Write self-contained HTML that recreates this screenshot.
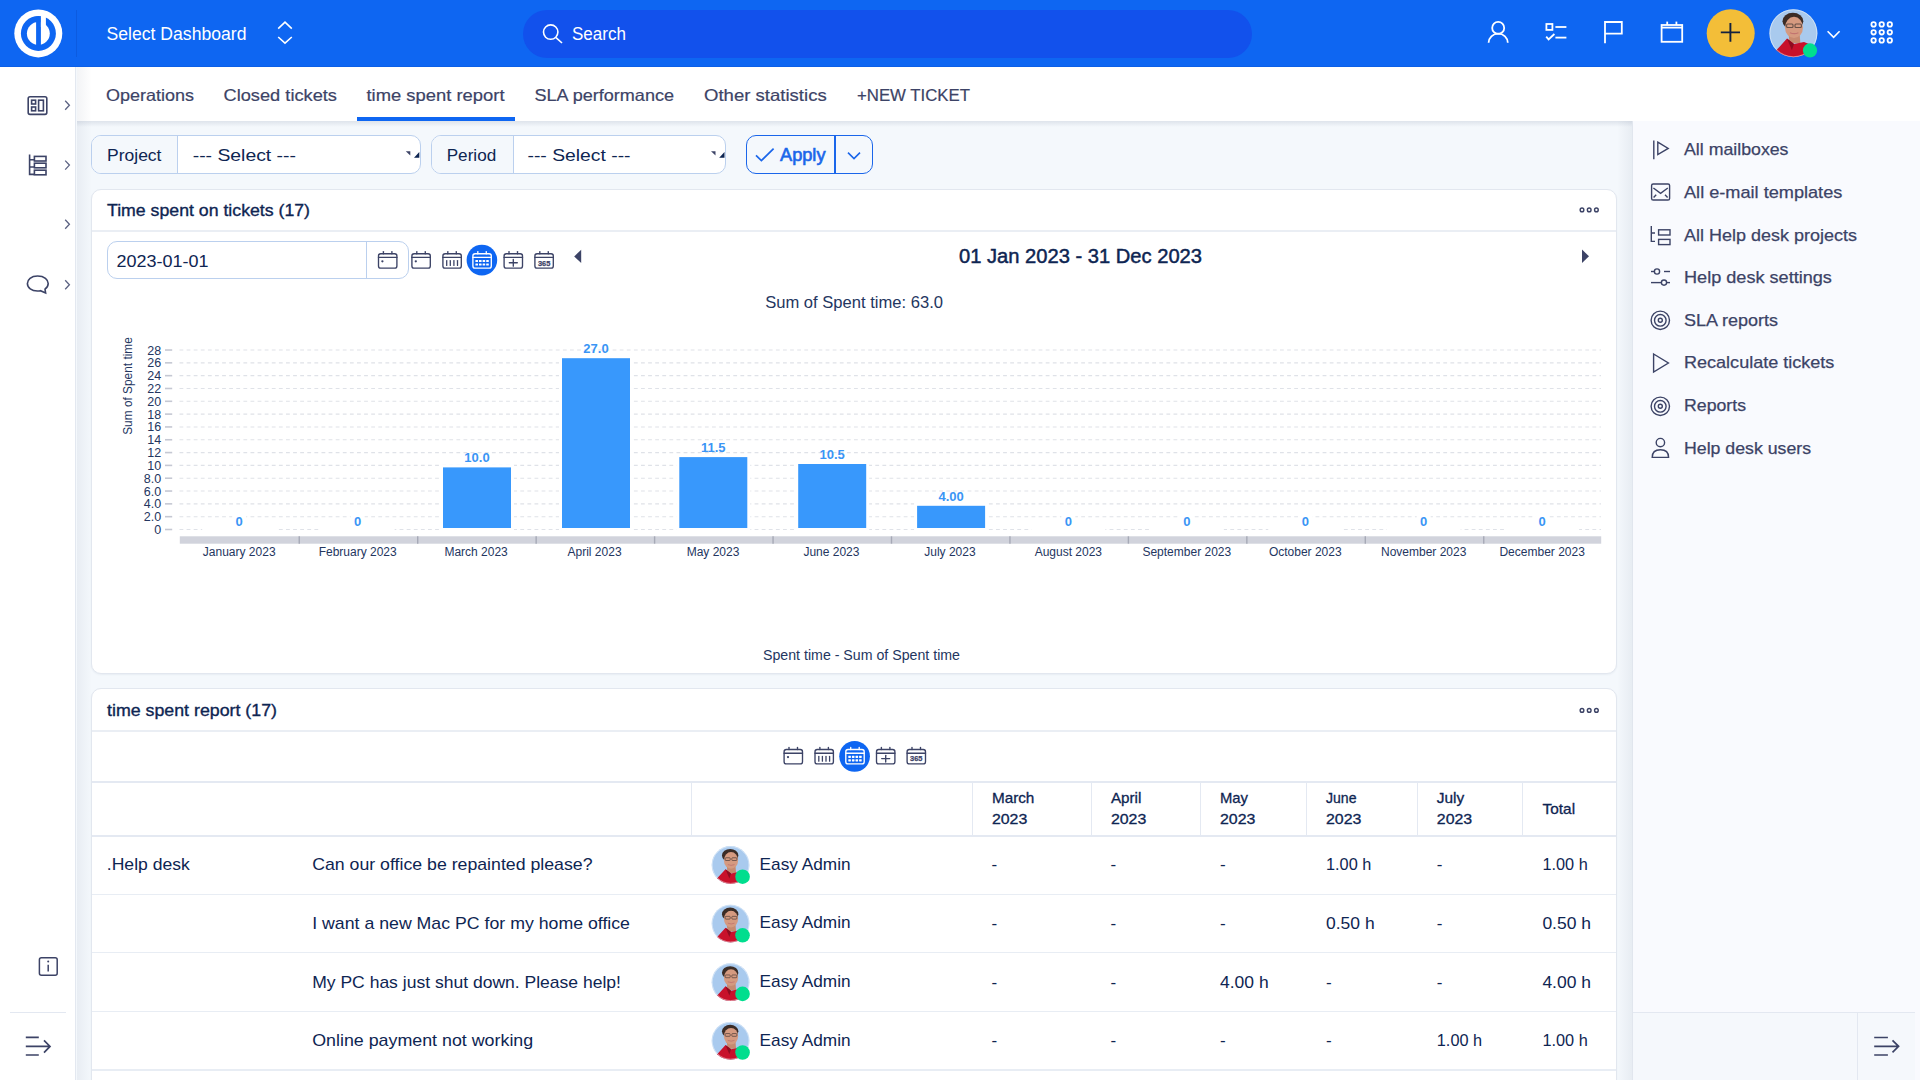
<!DOCTYPE html>
<html><head><meta charset="utf-8"><title>time spent report</title>
<style>
*{box-sizing:border-box}
html,body{margin:0;padding:0}
body{width:1920px;height:1080px;overflow:hidden;position:relative;background:#F4F8FC;font-family:"Liberation Sans",sans-serif}
.a{position:absolute}
svg text{font-family:"Liberation Sans",sans-serif}
</style></head><body>
<div class="a" style="left:0;top:0;width:1920px;height:67px;background:#0E66F2;border-bottom:1px solid #0C5FE6"></div>
<div class="a" style="left:76px;top:10px;width:1px;height:47px;background:#0C5BE0"></div>
<div class="a" style="left:523px;top:10px;width:729px;height:48px;border-radius:24px;background:#1251EC"></div>
<div class="a" style="left:0;top:67px;width:76px;height:1013px;background:#fff;border-right:1px solid #E3E8F0"></div>
<div class="a" style="left:77px;top:67px;width:1843px;height:54px;background:#fff"></div>
<div class="a" style="left:77px;top:121px;width:1843px;height:6px;background:linear-gradient(180deg,rgba(30,50,90,.10),rgba(30,50,90,0))"></div>
<div class="a" style="left:357px;top:117px;width:158px;height:4px;background:#0E66F2"></div>

<div class="a" style="left:1632px;top:121px;width:288px;height:959px;background:#F9FAFE;border-left:1px solid #E1E6EE"></div>
<div class="a" style="left:1617px;top:121px;width:15px;height:959px;background:linear-gradient(90deg,rgba(30,50,90,0),rgba(30,50,90,.06))"></div>
<div class="a" style="left:1633px;top:1012px;width:282px;height:68px;background:#F5F8FC;border-top:1px solid #E3E8F1"></div>
<div class="a" style="left:1857px;top:1013px;width:1px;height:67px;background:#E3E8F1"></div>
<div class="a" style="left:10px;top:1012px;width:56px;height:1px;background:#E3E8F1"></div>
<!-- filter -->
<div class="a" style="left:91px;top:135px;width:330px;height:39px;border:1px solid #BBD0EE;border-radius:10px;background:#fff;overflow:hidden"><div style="width:86px;height:100%;background:#F4F8FC;border-right:1px solid #BBD0EE"></div></div>
<div class="a" style="left:431px;top:135px;width:295px;height:39px;border:1px solid #BBD0EE;border-radius:10px;background:#fff;overflow:hidden"><div style="width:81.5px;height:100%;background:#F4F8FC;border-right:1px solid #BBD0EE"></div></div>
<div class="a" style="left:746px;top:135px;width:127px;height:39px;border:1.7px solid #1A66EA;border-radius:10px;background:#F4F8FC"></div>
<div class="a" style="left:834.2px;top:135px;width:2px;height:39px;background:#1A66EA"></div>
<!-- cards -->
<div class="a" style="left:91px;top:188.5px;width:1526px;height:485px;background:#fff;border:1px solid #E2E7EF;border-radius:10px;box-shadow:0 1px 2px rgba(40,60,100,.06)"></div>
<div class="a" style="left:92px;top:230px;width:1524px;height:1.5px;background:#EAEEF4"></div>
<div class="a" style="left:106.5px;top:241px;width:302px;height:38px;border:1px solid #BBD0EE;border-radius:10px;background:#fff"></div>
<div class="a" style="left:366px;top:242px;width:1px;height:36px;background:#BBD0EE"></div>
<div class="a" style="left:91px;top:688.3px;width:1526px;height:500px;background:#fff;border:1px solid #E2E7EF;border-radius:10px;box-shadow:0 1px 2px rgba(40,60,100,.06)"></div>
<div class="a" style="left:92px;top:730px;width:1524px;height:1.5px;background:#EAEEF4"></div>
<div class="a" style="left:92px;top:781px;width:1524px;height:1.5px;background:#E4E9F2"></div>
<div class="a" style="left:92px;top:835px;width:1524px;height:1.5px;background:#E4E9F2"></div>
<div class="a" style="left:92px;top:893.6px;width:1524px;height:1.2px;background:#E8EDF4"></div>
<div class="a" style="left:92px;top:952.2px;width:1524px;height:1.2px;background:#E8EDF4"></div>
<div class="a" style="left:92px;top:1010.8px;width:1524px;height:1.2px;background:#E8EDF4"></div>
<div class="a" style="left:92px;top:1069.4px;width:1524px;height:1.2px;background:#E8EDF4"></div>
<div class="a" style="left:691px;top:782px;width:1px;height:54px;background:#E4E9F2"></div>
<div class="a" style="left:971.5px;top:782px;width:1px;height:54px;background:#E4E9F2"></div>
<div class="a" style="left:1091px;top:782px;width:1px;height:54px;background:#E4E9F2"></div>
<div class="a" style="left:1200.4px;top:782px;width:1px;height:54px;background:#E4E9F2"></div>
<div class="a" style="left:1306px;top:782px;width:1px;height:54px;background:#E4E9F2"></div>
<div class="a" style="left:1416.5px;top:782px;width:1px;height:54px;background:#E4E9F2"></div>
<div class="a" style="left:1522px;top:782px;width:1px;height:54px;background:#E4E9F2"></div>
<div class="a" style="left:77px;top:67px;width:15px;height:1013px;background:linear-gradient(90deg,rgba(30,50,90,.055),rgba(30,50,90,0))"></div>
<svg class="a" style="left:0;top:0" width="1920" height="1080" viewBox="0 0 1920 1080">
<circle cx="38.3" cy="33.4" r="24" fill="#fff"/>
<circle cx="38.4" cy="33.4" r="17.5" fill="#0E66F2"/>
<circle cx="38.35" cy="33.5" r="11.45" fill="#fff"/>
<rect x="36.1" y="16.6" width="4.8" height="29.5" fill="#0E66F2"/>
<rect x="40.9" y="14" width="5" height="13" fill="#fff"/>
<text x="106.5" y="39.8" font-size="17.5" font-weight="400" fill="#fff" textLength="140" lengthAdjust="spacingAndGlyphs">Select Dashboard</text>
<path d="M278.2 28.6 L285 22.2 L291.8 28.6 M278.2 37 L285 43.2 L291.8 37" fill="none" stroke="#fff" stroke-width="1.6"/>
<circle cx="550.7" cy="32.1" r="7.2" fill="none" stroke="#fff" stroke-width="1.6"/>
<line x1="556" y1="37.6" x2="562" y2="43" stroke="#fff" stroke-width="1.6"/>
<text x="572" y="39.8" font-size="17.5" font-weight="400" fill="#fff" textLength="54" lengthAdjust="spacingAndGlyphs">Search</text>
<g fill="none" stroke="#fff" stroke-width="1.8"><circle cx="1498.2" cy="27.9" r="6"/><path d="M1488.6 42.8 A9.6 9.2 0 0 1 1507.8 42.8"/><rect x="1546.4" y="24" width="6" height="5.9"/><line x1="1555.4" y1="27" x2="1566.4" y2="27"/><line x1="1555.4" y1="37.6" x2="1566.4" y2="37.6"/><path d="M1546.2 36.6 L1548.6 39.4 L1554.4 34"/><path d="M1605 43.2 L1605 22 L1621.8 22 L1621.8 33.6 L1605 33.6"/><rect x="1661.6" y="25" width="20.6" height="16.8"/><line x1="1661.6" y1="27.6" x2="1682.2" y2="27.6"/><line x1="1667.2" y1="21.6" x2="1667.2" y2="25"/><line x1="1676.4" y1="21.6" x2="1676.4" y2="25"/></g>
<circle cx="1730.7" cy="33.2" r="24" fill="#F3BE38"/>
<path d="M1720.8 32.4 L1740 32.4 M1730.4 23 L1730.4 41.8" stroke="#13213F" stroke-width="1.9"/>
<g><clipPath id="av1793_33"><circle cx="1793.4" cy="33.2" r="24"/></clipPath><circle cx="1793.4" cy="33.2" r="24" fill="#A9CAEE"/><g clip-path="url(#av1793_33)"><path d="M1788.40 31.20 L1799.40 31.20 L1800.40 43.20 L1789.40 43.20 Z" fill="#C68A70"/><path d="M1765.40 57.20 L1777.00 49.50 L1787.00 38.50 L1794.00 44.00 L1804.00 42.00 L1817.40 47.20 L1821.40 63.20 L1765.40 63.20 Z" fill="#C8112B"/><path d="M1787.00 38.50 L1794.00 44.00 L1791.90 50.20 Z" fill="#8E0C20"/><ellipse cx="1792.90" cy="21.20" rx="10.40" ry="8.40" fill="#3B2C26"/><ellipse cx="1794.00" cy="27.40" rx="9.00" ry="10.60" fill="#D59A80"/><rect x="1786.60" y="24.00" width="6.40" height="3.50" rx="1.00" fill="none" stroke="#54433D" stroke-width="1.10" opacity=".85"/><rect x="1795.00" y="24.00" width="6.40" height="3.50" rx="1.00" fill="none" stroke="#54433D" stroke-width="1.10" opacity=".85"/><path d="M1789.90 32.70 Q1794.40 34.60 1798.40 32.70" fill="none" stroke="#B9646A" stroke-width="1.10" opacity=".7"/></g><circle cx="1793.4" cy="33.2" r="23.5" fill="none" stroke="#fff" stroke-opacity=".45" stroke-width="1"/><circle cx="1810" cy="50.4" r="7.1" fill="#00DE8E"/></g>
<path d="M1827.6 31.2 L1833.6 37.4 L1839.6 31.2" fill="none" stroke="#fff" stroke-width="1.6"/>
<circle cx="1873.6" cy="24.4" r="2.2" fill="none" stroke="#fff" stroke-width="1.8"/>
<circle cx="1881.7" cy="24.4" r="2.2" fill="none" stroke="#fff" stroke-width="1.8"/>
<circle cx="1889.8" cy="24.4" r="2.2" fill="none" stroke="#fff" stroke-width="1.8"/>
<circle cx="1873.6" cy="32.3" r="2.2" fill="none" stroke="#fff" stroke-width="1.8"/>
<circle cx="1881.7" cy="32.3" r="2.2" fill="none" stroke="#fff" stroke-width="1.8"/>
<circle cx="1889.8" cy="32.3" r="2.2" fill="none" stroke="#fff" stroke-width="1.8"/>
<circle cx="1873.6" cy="40.4" r="2.2" fill="none" stroke="#fff" stroke-width="1.8"/>
<circle cx="1881.7" cy="40.4" r="2.2" fill="none" stroke="#fff" stroke-width="1.8"/>
<circle cx="1889.8" cy="40.4" r="2.2" fill="none" stroke="#fff" stroke-width="1.8"/>
<g fill="none" stroke="#3C4366" stroke-width="1.6"><rect x="28.2" y="96.8" width="18.6" height="17.6" rx="1.8"/><rect x="31.6" y="100.2" width="4" height="3.8"/><rect x="31.6" y="107" width="4" height="3.8"/><rect x="38.6" y="100.2" width="4.8" height="10.6"/><path d="M29.6 154.5 L29.6 174.4 L34 174.4 M29.6 159.8 L34 159.8 M29.6 167 L34 167"/><rect x="34.4" y="156.4" width="11.6" height="4.6"/><rect x="34.4" y="163.2" width="11.6" height="4.6"/><rect x="34.4" y="170.2" width="11.6" height="4.6"/><path d="M37.6 276 C 31 276 27.4 279.6 27.4 283.6 C 27.4 288 31.6 291 37.4 291 C 38.6 291 39.6 290.9 40.4 290.7 L 45.6 293 L 45 289.2 C 47.2 287.7 48.2 285.7 48.2 283.6 C 48.2 279.6 44.4 276 37.6 276 Z"/></g>
<path d="M65.2 100.7 L69.4 105.2 L65.2 109.7" fill="none" stroke="#5B6282" stroke-width="1.3"/>
<path d="M65.2 160.6 L69.4 165.1 L65.2 169.6" fill="none" stroke="#5B6282" stroke-width="1.3"/>
<path d="M65.2 219.8 L69.4 224.3 L65.2 228.8" fill="none" stroke="#5B6282" stroke-width="1.3"/>
<path d="M65.2 280.2 L69.4 284.7 L65.2 289.2" fill="none" stroke="#5B6282" stroke-width="1.3"/>
<g fill="none" stroke="#3C4366" stroke-width="1.5"><rect x="39.4" y="957.8" width="17.8" height="17.4" rx="2"/><line x1="48.2" y1="964.8" x2="48.2" y2="971.4"/><path d="M25.8 1037.4 L38.8 1037.4 M25.8 1055 L38.8 1055 M25.8 1046.4 L49.6 1046.4 M44 1040.4 L50 1046.4 L44 1052.6" stroke-width="1.7"/></g>
<circle cx="48.2" cy="961.6" r="1" fill="#3C4366"/>
<path d="M1874.2 1037.5 L1887.9 1037.5 M1874.2 1055 L1887.9 1055 M1874.2 1046.3 L1898.4 1046.3 M1892.5 1040.4 L1898.6 1046.3 L1892.5 1052.4" fill="none" stroke="#3C4366" stroke-width="1.7"/>
<text x="106" y="100.6" font-size="16.5" font-weight="400" fill="#3C4366" textLength="88" lengthAdjust="spacingAndGlyphs" stroke="#3C4366" stroke-width="0.2">Operations</text>
<text x="223.5" y="100.6" font-size="16.5" font-weight="400" fill="#3C4366" textLength="113.5" lengthAdjust="spacingAndGlyphs" stroke="#3C4366" stroke-width="0.2">Closed tickets</text>
<text x="366.5" y="100.6" font-size="16.5" font-weight="400" fill="#3C4366" textLength="138" lengthAdjust="spacingAndGlyphs" stroke="#3C4366" stroke-width="0.2">time spent report</text>
<text x="534.5" y="100.6" font-size="16.5" font-weight="400" fill="#3C4366" textLength="139.5" lengthAdjust="spacingAndGlyphs" stroke="#3C4366" stroke-width="0.2">SLA performance</text>
<text x="704" y="100.6" font-size="16.5" font-weight="400" fill="#3C4366" textLength="122.7" lengthAdjust="spacingAndGlyphs" stroke="#3C4366" stroke-width="0.2">Other statistics</text>
<text x="857" y="100.6" font-size="16.5" font-weight="400" fill="#3C4366" textLength="113" lengthAdjust="spacingAndGlyphs" stroke="#3C4366" stroke-width="0.2">+NEW TICKET</text>
<text x="107" y="160.6" font-size="17" font-weight="400" fill="#0E2552" textLength="54.5" lengthAdjust="spacingAndGlyphs">Project</text>
<text x="192.7" y="161.4" font-size="17" font-weight="400" fill="#0E2552" textLength="103.3" lengthAdjust="spacingAndGlyphs">--- Select ---</text>
<text x="446.7" y="160.6" font-size="17" font-weight="400" fill="#0E2552" textLength="49.5" lengthAdjust="spacingAndGlyphs">Period</text>
<text x="527.5" y="161.4" font-size="17" font-weight="400" fill="#0E2552" textLength="103" lengthAdjust="spacingAndGlyphs">--- Select ---</text>
<path d="M405.8 151.2 L410.3 151.2 L410.3 155.4 Z" fill="#3C4366"/>
<path d="M419.3 152 L419.3 157.8 L414.0 157.8 Z" fill="#0E2552"/>
<path d="M711 151.2 L715.5 151.2 L715.5 155.4 Z" fill="#3C4366"/>
<path d="M724.5 152 L724.5 157.8 L719.2 157.8 Z" fill="#0E2552"/>
<path d="M756 155.4 L761.4 160.6 L773.6 148.6" fill="none" stroke="#1A66EA" stroke-width="1.7"/>
<text x="780" y="160.5" font-size="17.5" font-weight="400" fill="#1A66EA" textLength="45.5" lengthAdjust="spacingAndGlyphs" stroke="#1A66EA" stroke-width="0.6">Apply</text>
<path d="M848 152.6 L854 158.6 L860 152.6" fill="none" stroke="#1A66EA" stroke-width="1.6"/>
<text x="107" y="216.1" font-size="17" font-weight="400" fill="#0E2552" textLength="203" lengthAdjust="spacingAndGlyphs" stroke="#0E2552" stroke-width="0.35">Time spent on tickets (17)</text>
<circle cx="1582" cy="209.9" r="1.85" fill="none" stroke="#3C4366" stroke-width="1.4"/>
<circle cx="1589.2" cy="209.9" r="1.85" fill="none" stroke="#3C4366" stroke-width="1.4"/>
<circle cx="1596.4" cy="209.9" r="1.85" fill="none" stroke="#3C4366" stroke-width="1.4"/>
<text x="116.5" y="267.2" font-size="17" font-weight="400" fill="#0E2552" textLength="92" lengthAdjust="spacingAndGlyphs">2023-01-01</text>
<g transform="translate(378,251.2)" fill="none" stroke="#3C4366" stroke-width="1.35" stroke-linecap="round"><rect x="0.5" y="2.5" width="18.4" height="14.4" rx="2.2"/><line x1="0.5" y1="6.2" x2="18.9" y2="6.2"/><line x1="5.4" y1="0.4" x2="5.4" y2="2.5"/><line x1="13.9" y1="0.4" x2="13.9" y2="2.5"/><circle cx="4.4" cy="10.1" r="1.15" fill="#3C4366" stroke="none"/></g>
<g transform="translate(411.4,251.2)" fill="none" stroke="#3C4366" stroke-width="1.35" stroke-linecap="round"><rect x="0.5" y="2.5" width="18.4" height="14.4" rx="2.2"/><line x1="0.5" y1="6.2" x2="18.9" y2="6.2"/><line x1="5.4" y1="0.4" x2="5.4" y2="2.5"/><line x1="13.9" y1="0.4" x2="13.9" y2="2.5"/><circle cx="4.4" cy="10.1" r="1.15" fill="#3C4366" stroke="none"/></g>
<g transform="translate(442.4,251.2)" fill="none" stroke="#3C4366" stroke-width="1.35" stroke-linecap="round"><rect x="0.5" y="2.5" width="18.4" height="14.4" rx="2.2"/><line x1="0.5" y1="6.2" x2="18.9" y2="6.2"/><line x1="5.4" y1="0.4" x2="5.4" y2="2.5"/><line x1="13.9" y1="0.4" x2="13.9" y2="2.5"/><line x1="4.30" y1="9.4" x2="4.30" y2="14.2" stroke-width="1.3"/><line x1="7.90" y1="9.4" x2="7.90" y2="14.2" stroke-width="1.3"/><line x1="11.50" y1="9.4" x2="11.50" y2="14.2" stroke-width="1.3"/><line x1="15.10" y1="9.4" x2="15.10" y2="14.2" stroke-width="1.3"/></g>
<circle cx="481.9" cy="260.1" r="15.3" fill="#0E66F2"/>
<g transform="translate(472.4,251.2)" fill="none" stroke="#fff" stroke-width="1.35" stroke-linecap="round"><rect x="0.5" y="2.5" width="18.4" height="14.4" rx="2.2"/><line x1="0.5" y1="6.2" x2="18.9" y2="6.2"/><line x1="5.4" y1="0.4" x2="5.4" y2="2.5"/><line x1="13.9" y1="0.4" x2="13.9" y2="2.5"/><rect x="3.00" y="8.70" width="2.6" height="2.2" rx="0.4" fill="#fff" stroke="none"/><rect x="6.60" y="8.70" width="2.6" height="2.2" rx="0.4" fill="#fff" stroke="none"/><rect x="10.20" y="8.70" width="2.6" height="2.2" rx="0.4" fill="#fff" stroke="none"/><rect x="13.80" y="8.70" width="2.6" height="2.2" rx="0.4" fill="#fff" stroke="none"/><rect x="3.00" y="12.20" width="2.6" height="2.2" rx="0.4" fill="#fff" stroke="none"/><rect x="6.60" y="12.20" width="2.6" height="2.2" rx="0.4" fill="#fff" stroke="none"/><rect x="10.20" y="12.20" width="2.6" height="2.2" rx="0.4" fill="#fff" stroke="none"/><rect x="13.80" y="12.20" width="2.6" height="2.2" rx="0.4" fill="#fff" stroke="none"/></g>
<g transform="translate(503.6,251.2)" fill="none" stroke="#3C4366" stroke-width="1.35" stroke-linecap="round"><rect x="0.5" y="2.5" width="18.4" height="14.4" rx="2.2"/><line x1="0.5" y1="6.2" x2="18.9" y2="6.2"/><line x1="5.4" y1="0.4" x2="5.4" y2="2.5"/><line x1="13.9" y1="0.4" x2="13.9" y2="2.5"/><line x1="5.7" y1="11.6" x2="13.7" y2="11.6"/><line x1="9.7" y1="8.3" x2="9.7" y2="15"/></g>
<g transform="translate(534.4,251.2)" fill="none" stroke="#3C4366" stroke-width="1.35" stroke-linecap="round"><rect x="0.5" y="2.5" width="18.4" height="14.4" rx="2.2"/><line x1="0.5" y1="6.2" x2="18.9" y2="6.2"/><line x1="5.4" y1="0.4" x2="5.4" y2="2.5"/><line x1="13.9" y1="0.4" x2="13.9" y2="2.5"/><text x="9.7" y="14.4" font-size="7.4" font-weight="700" fill="#3C4366" stroke="#3C4366" stroke-width="0.25" text-anchor="middle" textLength="12.4" lengthAdjust="spacingAndGlyphs">365</text></g>
<path d="M581.2 249.8 L574.2 256.4 L581.2 263 Z" fill="#3C4366"/>
<path d="M1582 249.6 L1589 256.3 L1582 262.9 Z" fill="#3C4366"/>
<text x="959" y="262.7" font-size="19.5" font-weight="400" fill="#0E2552" textLength="243" lengthAdjust="spacingAndGlyphs" stroke="#0E2552" stroke-width="0.45">01 Jan 2023 - 31 Dec 2023</text>
<text x="765.2" y="308.2" font-size="16.5" font-weight="400" fill="#24365F" textLength="177.8" lengthAdjust="spacingAndGlyphs">Sum of Spent time: 63.0</text>
<line x1="179.5" y1="529.50" x2="1601" y2="529.50" stroke="#DFE2E8" stroke-width="1.1" stroke-dasharray="3.8 3.3"/>
<line x1="165" y1="529.50" x2="172.2" y2="529.50" stroke="#C5C8D3" stroke-width="1.6"/>
<text x="161.2" y="534.00" font-size="12.5" font-weight="400" fill="#24365F" text-anchor="end">0</text>
<line x1="179.5" y1="516.68" x2="1601" y2="516.68" stroke="#DFE2E8" stroke-width="1.1" stroke-dasharray="3.8 3.3"/>
<line x1="165" y1="516.68" x2="172.2" y2="516.68" stroke="#C5C8D3" stroke-width="1.6"/>
<text x="161.2" y="521.18" font-size="12.5" font-weight="400" fill="#24365F" text-anchor="end">2.0</text>
<line x1="179.5" y1="503.86" x2="1601" y2="503.86" stroke="#DFE2E8" stroke-width="1.1" stroke-dasharray="3.8 3.3"/>
<line x1="165" y1="503.86" x2="172.2" y2="503.86" stroke="#C5C8D3" stroke-width="1.6"/>
<text x="161.2" y="508.36" font-size="12.5" font-weight="400" fill="#24365F" text-anchor="end">4.0</text>
<line x1="179.5" y1="491.04" x2="1601" y2="491.04" stroke="#DFE2E8" stroke-width="1.1" stroke-dasharray="3.8 3.3"/>
<line x1="165" y1="491.04" x2="172.2" y2="491.04" stroke="#C5C8D3" stroke-width="1.6"/>
<text x="161.2" y="495.54" font-size="12.5" font-weight="400" fill="#24365F" text-anchor="end">6.0</text>
<line x1="179.5" y1="478.22" x2="1601" y2="478.22" stroke="#DFE2E8" stroke-width="1.1" stroke-dasharray="3.8 3.3"/>
<line x1="165" y1="478.22" x2="172.2" y2="478.22" stroke="#C5C8D3" stroke-width="1.6"/>
<text x="161.2" y="482.72" font-size="12.5" font-weight="400" fill="#24365F" text-anchor="end">8.0</text>
<line x1="179.5" y1="465.40" x2="1601" y2="465.40" stroke="#DFE2E8" stroke-width="1.1" stroke-dasharray="3.8 3.3"/>
<line x1="165" y1="465.40" x2="172.2" y2="465.40" stroke="#C5C8D3" stroke-width="1.6"/>
<text x="161.2" y="469.90" font-size="12.5" font-weight="400" fill="#24365F" text-anchor="end">10</text>
<line x1="179.5" y1="452.58" x2="1601" y2="452.58" stroke="#DFE2E8" stroke-width="1.1" stroke-dasharray="3.8 3.3"/>
<line x1="165" y1="452.58" x2="172.2" y2="452.58" stroke="#C5C8D3" stroke-width="1.6"/>
<text x="161.2" y="457.08" font-size="12.5" font-weight="400" fill="#24365F" text-anchor="end">12</text>
<line x1="179.5" y1="439.76" x2="1601" y2="439.76" stroke="#DFE2E8" stroke-width="1.1" stroke-dasharray="3.8 3.3"/>
<line x1="165" y1="439.76" x2="172.2" y2="439.76" stroke="#C5C8D3" stroke-width="1.6"/>
<text x="161.2" y="444.26" font-size="12.5" font-weight="400" fill="#24365F" text-anchor="end">14</text>
<line x1="179.5" y1="426.94" x2="1601" y2="426.94" stroke="#DFE2E8" stroke-width="1.1" stroke-dasharray="3.8 3.3"/>
<line x1="165" y1="426.94" x2="172.2" y2="426.94" stroke="#C5C8D3" stroke-width="1.6"/>
<text x="161.2" y="431.44" font-size="12.5" font-weight="400" fill="#24365F" text-anchor="end">16</text>
<line x1="179.5" y1="414.12" x2="1601" y2="414.12" stroke="#DFE2E8" stroke-width="1.1" stroke-dasharray="3.8 3.3"/>
<line x1="165" y1="414.12" x2="172.2" y2="414.12" stroke="#C5C8D3" stroke-width="1.6"/>
<text x="161.2" y="418.62" font-size="12.5" font-weight="400" fill="#24365F" text-anchor="end">18</text>
<line x1="179.5" y1="401.30" x2="1601" y2="401.30" stroke="#DFE2E8" stroke-width="1.1" stroke-dasharray="3.8 3.3"/>
<line x1="165" y1="401.30" x2="172.2" y2="401.30" stroke="#C5C8D3" stroke-width="1.6"/>
<text x="161.2" y="405.80" font-size="12.5" font-weight="400" fill="#24365F" text-anchor="end">20</text>
<line x1="179.5" y1="388.48" x2="1601" y2="388.48" stroke="#DFE2E8" stroke-width="1.1" stroke-dasharray="3.8 3.3"/>
<line x1="165" y1="388.48" x2="172.2" y2="388.48" stroke="#C5C8D3" stroke-width="1.6"/>
<text x="161.2" y="392.98" font-size="12.5" font-weight="400" fill="#24365F" text-anchor="end">22</text>
<line x1="179.5" y1="375.66" x2="1601" y2="375.66" stroke="#DFE2E8" stroke-width="1.1" stroke-dasharray="3.8 3.3"/>
<line x1="165" y1="375.66" x2="172.2" y2="375.66" stroke="#C5C8D3" stroke-width="1.6"/>
<text x="161.2" y="380.16" font-size="12.5" font-weight="400" fill="#24365F" text-anchor="end">24</text>
<line x1="179.5" y1="362.84" x2="1601" y2="362.84" stroke="#DFE2E8" stroke-width="1.1" stroke-dasharray="3.8 3.3"/>
<line x1="165" y1="362.84" x2="172.2" y2="362.84" stroke="#C5C8D3" stroke-width="1.6"/>
<text x="161.2" y="367.34" font-size="12.5" font-weight="400" fill="#24365F" text-anchor="end">26</text>
<line x1="179.5" y1="350.02" x2="1601" y2="350.02" stroke="#DFE2E8" stroke-width="1.1" stroke-dasharray="3.8 3.3"/>
<line x1="165" y1="350.02" x2="172.2" y2="350.02" stroke="#C5C8D3" stroke-width="1.6"/>
<text x="161.2" y="354.52" font-size="12.5" font-weight="400" fill="#24365F" text-anchor="end">28</text>
<text transform="translate(131.6,386) rotate(-90)" font-size="12" fill="#24365F" text-anchor="middle" textLength="97.6" lengthAdjust="spacingAndGlyphs">Sum of Spent time</text>
<rect x="202.20" y="526" width="74" height="6" fill="#fff"/>
<rect x="232.20" y="514" width="14" height="14" fill="#fff"/>
<text x="239.20" y="525.8" font-size="13" font-weight="700" fill="#3A95F5" text-anchor="middle">0</text>
<text x="239.20" y="556.2" font-size="12" font-weight="400" fill="#24365F" text-anchor="middle">January 2023</text>
<rect x="320.65" y="526" width="74" height="6" fill="#fff"/>
<rect x="350.65" y="514" width="14" height="14" fill="#fff"/>
<text x="357.65" y="525.8" font-size="13" font-weight="700" fill="#3A95F5" text-anchor="middle">0</text>
<text x="357.65" y="556.2" font-size="12" font-weight="400" fill="#24365F" text-anchor="middle">February 2023</text>
<rect x="440.00" y="464.40" width="74" height="67.60" fill="#fff"/>
<rect x="443.00" y="467.40" width="68" height="60.60" fill="#3898FC"/>
<text x="477.00" y="462.20" font-size="13" font-weight="700" fill="#3A95F5" text-anchor="middle">10.0</text>
<text x="476.10" y="556.2" font-size="12" font-weight="400" fill="#24365F" text-anchor="middle">March 2023</text>
<rect x="559.00" y="355.20" width="74" height="176.80" fill="#fff"/>
<rect x="562.00" y="358.20" width="68" height="169.80" fill="#3898FC"/>
<text x="596.00" y="353.00" font-size="13" font-weight="700" fill="#3A95F5" text-anchor="middle">27.0</text>
<text x="594.55" y="556.2" font-size="12" font-weight="400" fill="#24365F" text-anchor="middle">April 2023</text>
<rect x="676.30" y="454.10" width="74" height="77.90" fill="#fff"/>
<rect x="679.30" y="457.10" width="68" height="70.90" fill="#3898FC"/>
<text x="713.30" y="451.90" font-size="13" font-weight="700" fill="#3A95F5" text-anchor="middle">11.5</text>
<text x="713.00" y="556.2" font-size="12" font-weight="400" fill="#24365F" text-anchor="middle">May 2023</text>
<rect x="795.20" y="461.00" width="74" height="71.00" fill="#fff"/>
<rect x="798.20" y="464.00" width="68" height="64.00" fill="#3898FC"/>
<text x="832.20" y="458.80" font-size="13" font-weight="700" fill="#3A95F5" text-anchor="middle">10.5</text>
<text x="831.45" y="556.2" font-size="12" font-weight="400" fill="#24365F" text-anchor="middle">June 2023</text>
<rect x="914.10" y="502.80" width="74" height="29.20" fill="#fff"/>
<rect x="917.10" y="505.80" width="68" height="22.20" fill="#3898FC"/>
<text x="951.10" y="500.60" font-size="13" font-weight="700" fill="#3A95F5" text-anchor="middle">4.00</text>
<text x="949.90" y="556.2" font-size="12" font-weight="400" fill="#24365F" text-anchor="middle">July 2023</text>
<rect x="1031.35" y="526" width="74" height="6" fill="#fff"/>
<rect x="1061.35" y="514" width="14" height="14" fill="#fff"/>
<text x="1068.35" y="525.8" font-size="13" font-weight="700" fill="#3A95F5" text-anchor="middle">0</text>
<text x="1068.35" y="556.2" font-size="12" font-weight="400" fill="#24365F" text-anchor="middle">August 2023</text>
<rect x="1149.80" y="526" width="74" height="6" fill="#fff"/>
<rect x="1179.80" y="514" width="14" height="14" fill="#fff"/>
<text x="1186.80" y="525.8" font-size="13" font-weight="700" fill="#3A95F5" text-anchor="middle">0</text>
<text x="1186.80" y="556.2" font-size="12" font-weight="400" fill="#24365F" text-anchor="middle">September 2023</text>
<rect x="1268.25" y="526" width="74" height="6" fill="#fff"/>
<rect x="1298.25" y="514" width="14" height="14" fill="#fff"/>
<text x="1305.25" y="525.8" font-size="13" font-weight="700" fill="#3A95F5" text-anchor="middle">0</text>
<text x="1305.25" y="556.2" font-size="12" font-weight="400" fill="#24365F" text-anchor="middle">October 2023</text>
<rect x="1386.70" y="526" width="74" height="6" fill="#fff"/>
<rect x="1416.70" y="514" width="14" height="14" fill="#fff"/>
<text x="1423.70" y="525.8" font-size="13" font-weight="700" fill="#3A95F5" text-anchor="middle">0</text>
<text x="1423.70" y="556.2" font-size="12" font-weight="400" fill="#24365F" text-anchor="middle">November 2023</text>
<rect x="1505.15" y="526" width="74" height="6" fill="#fff"/>
<rect x="1535.15" y="514" width="14" height="14" fill="#fff"/>
<text x="1542.15" y="525.8" font-size="13" font-weight="700" fill="#3A95F5" text-anchor="middle">0</text>
<text x="1542.15" y="556.2" font-size="12" font-weight="400" fill="#24365F" text-anchor="middle">December 2023</text>
<rect x="179.8" y="536.3" width="1421.4" height="7.4" fill="#D1D3DC"/>
<line x1="299.25" y1="536.3" x2="299.25" y2="543.7" stroke="#A6A9B6" stroke-width="1.4"/>
<line x1="417.70" y1="536.3" x2="417.70" y2="543.7" stroke="#A6A9B6" stroke-width="1.4"/>
<line x1="536.15" y1="536.3" x2="536.15" y2="543.7" stroke="#A6A9B6" stroke-width="1.4"/>
<line x1="654.60" y1="536.3" x2="654.60" y2="543.7" stroke="#A6A9B6" stroke-width="1.4"/>
<line x1="773.05" y1="536.3" x2="773.05" y2="543.7" stroke="#A6A9B6" stroke-width="1.4"/>
<line x1="891.50" y1="536.3" x2="891.50" y2="543.7" stroke="#A6A9B6" stroke-width="1.4"/>
<line x1="1009.95" y1="536.3" x2="1009.95" y2="543.7" stroke="#A6A9B6" stroke-width="1.4"/>
<line x1="1128.40" y1="536.3" x2="1128.40" y2="543.7" stroke="#A6A9B6" stroke-width="1.4"/>
<line x1="1246.85" y1="536.3" x2="1246.85" y2="543.7" stroke="#A6A9B6" stroke-width="1.4"/>
<line x1="1365.30" y1="536.3" x2="1365.30" y2="543.7" stroke="#A6A9B6" stroke-width="1.4"/>
<line x1="1483.75" y1="536.3" x2="1483.75" y2="543.7" stroke="#A6A9B6" stroke-width="1.4"/>
<text x="763" y="659.8" font-size="14" font-weight="400" fill="#24365F" textLength="197" lengthAdjust="spacingAndGlyphs">Spent time - Sum of Spent time</text>
<text x="107" y="716.3" font-size="17" font-weight="400" fill="#0E2552" textLength="170" lengthAdjust="spacingAndGlyphs" stroke="#0E2552" stroke-width="0.35">time spent report (17)</text>
<circle cx="1582" cy="710.4" r="1.85" fill="none" stroke="#3C4366" stroke-width="1.4"/>
<circle cx="1589.2" cy="710.4" r="1.85" fill="none" stroke="#3C4366" stroke-width="1.4"/>
<circle cx="1596.4" cy="710.4" r="1.85" fill="none" stroke="#3C4366" stroke-width="1.4"/>
<g transform="translate(783.6,747)" fill="none" stroke="#3C4366" stroke-width="1.35" stroke-linecap="round"><rect x="0.5" y="2.5" width="18.4" height="14.4" rx="2.2"/><line x1="0.5" y1="6.2" x2="18.9" y2="6.2"/><line x1="5.4" y1="0.4" x2="5.4" y2="2.5"/><line x1="13.9" y1="0.4" x2="13.9" y2="2.5"/><circle cx="4.4" cy="10.1" r="1.15" fill="#3C4366" stroke="none"/></g>
<g transform="translate(814.5,747)" fill="none" stroke="#3C4366" stroke-width="1.35" stroke-linecap="round"><rect x="0.5" y="2.5" width="18.4" height="14.4" rx="2.2"/><line x1="0.5" y1="6.2" x2="18.9" y2="6.2"/><line x1="5.4" y1="0.4" x2="5.4" y2="2.5"/><line x1="13.9" y1="0.4" x2="13.9" y2="2.5"/><line x1="4.30" y1="9.4" x2="4.30" y2="14.2" stroke-width="1.3"/><line x1="7.90" y1="9.4" x2="7.90" y2="14.2" stroke-width="1.3"/><line x1="11.50" y1="9.4" x2="11.50" y2="14.2" stroke-width="1.3"/><line x1="15.10" y1="9.4" x2="15.10" y2="14.2" stroke-width="1.3"/></g>
<circle cx="854.6" cy="756.3" r="15.4" fill="#0E66F2"/>
<g transform="translate(845.3,747)" fill="none" stroke="#fff" stroke-width="1.35" stroke-linecap="round"><rect x="0.5" y="2.5" width="18.4" height="14.4" rx="2.2"/><line x1="0.5" y1="6.2" x2="18.9" y2="6.2"/><line x1="5.4" y1="0.4" x2="5.4" y2="2.5"/><line x1="13.9" y1="0.4" x2="13.9" y2="2.5"/><rect x="3.00" y="8.70" width="2.6" height="2.2" rx="0.4" fill="#fff" stroke="none"/><rect x="6.60" y="8.70" width="2.6" height="2.2" rx="0.4" fill="#fff" stroke="none"/><rect x="10.20" y="8.70" width="2.6" height="2.2" rx="0.4" fill="#fff" stroke="none"/><rect x="13.80" y="8.70" width="2.6" height="2.2" rx="0.4" fill="#fff" stroke="none"/><rect x="3.00" y="12.20" width="2.6" height="2.2" rx="0.4" fill="#fff" stroke="none"/><rect x="6.60" y="12.20" width="2.6" height="2.2" rx="0.4" fill="#fff" stroke="none"/><rect x="10.20" y="12.20" width="2.6" height="2.2" rx="0.4" fill="#fff" stroke="none"/><rect x="13.80" y="12.20" width="2.6" height="2.2" rx="0.4" fill="#fff" stroke="none"/></g>
<g transform="translate(876,747)" fill="none" stroke="#3C4366" stroke-width="1.35" stroke-linecap="round"><rect x="0.5" y="2.5" width="18.4" height="14.4" rx="2.2"/><line x1="0.5" y1="6.2" x2="18.9" y2="6.2"/><line x1="5.4" y1="0.4" x2="5.4" y2="2.5"/><line x1="13.9" y1="0.4" x2="13.9" y2="2.5"/><line x1="5.7" y1="11.6" x2="13.7" y2="11.6"/><line x1="9.7" y1="8.3" x2="9.7" y2="15"/></g>
<g transform="translate(906.6,747)" fill="none" stroke="#3C4366" stroke-width="1.35" stroke-linecap="round"><rect x="0.5" y="2.5" width="18.4" height="14.4" rx="2.2"/><line x1="0.5" y1="6.2" x2="18.9" y2="6.2"/><line x1="5.4" y1="0.4" x2="5.4" y2="2.5"/><line x1="13.9" y1="0.4" x2="13.9" y2="2.5"/><text x="9.7" y="14.4" font-size="7.4" font-weight="700" fill="#3C4366" stroke="#3C4366" stroke-width="0.25" text-anchor="middle" textLength="12.4" lengthAdjust="spacingAndGlyphs">365</text></g>
<text x="991.9" y="802.6" font-size="15" font-weight="400" fill="#0E2552" textLength="42.5" lengthAdjust="spacingAndGlyphs" stroke="#0E2552" stroke-width="0.3">March</text>
<text x="991.9" y="823.8" font-size="15" font-weight="400" fill="#0E2552" textLength="35.4" lengthAdjust="spacingAndGlyphs" stroke="#0E2552" stroke-width="0.3">2023</text>
<text x="1110.9" y="802.6" font-size="15" font-weight="400" fill="#0E2552" textLength="30.5" lengthAdjust="spacingAndGlyphs" stroke="#0E2552" stroke-width="0.3">April</text>
<text x="1110.9" y="823.8" font-size="15" font-weight="400" fill="#0E2552" textLength="35.4" lengthAdjust="spacingAndGlyphs" stroke="#0E2552" stroke-width="0.3">2023</text>
<text x="1220" y="802.6" font-size="15" font-weight="400" fill="#0E2552" textLength="28" lengthAdjust="spacingAndGlyphs" stroke="#0E2552" stroke-width="0.3">May</text>
<text x="1220" y="823.8" font-size="15" font-weight="400" fill="#0E2552" textLength="35.4" lengthAdjust="spacingAndGlyphs" stroke="#0E2552" stroke-width="0.3">2023</text>
<text x="1326" y="802.6" font-size="15" font-weight="400" fill="#0E2552" textLength="30.5" lengthAdjust="spacingAndGlyphs" stroke="#0E2552" stroke-width="0.3">June</text>
<text x="1326" y="823.8" font-size="15" font-weight="400" fill="#0E2552" textLength="35.4" lengthAdjust="spacingAndGlyphs" stroke="#0E2552" stroke-width="0.3">2023</text>
<text x="1436.8" y="802.6" font-size="15" font-weight="400" fill="#0E2552" textLength="27.5" lengthAdjust="spacingAndGlyphs" stroke="#0E2552" stroke-width="0.3">July</text>
<text x="1436.8" y="823.8" font-size="15" font-weight="400" fill="#0E2552" textLength="35.4" lengthAdjust="spacingAndGlyphs" stroke="#0E2552" stroke-width="0.3">2023</text>
<text x="1542.6" y="813.8" font-size="15" font-weight="400" fill="#0E2552" textLength="32.5" lengthAdjust="spacingAndGlyphs" stroke="#0E2552" stroke-width="0.3">Total</text>
<text x="106.8" y="870.4" font-size="17" font-weight="400" fill="#0E2552" textLength="83" lengthAdjust="spacingAndGlyphs">.Help desk</text>
<text x="312.2" y="870.4" font-size="17" font-weight="400" fill="#0E2552" textLength="280.3" lengthAdjust="spacingAndGlyphs">Can our office be repainted please?</text>
<g><clipPath id="av730_865"><circle cx="730.55" cy="865.0" r="18.9"/></clipPath><circle cx="730.55" cy="865.0" r="18.9" fill="#A9CAEE"/><g clip-path="url(#av730_865)"><path d="M726.61 863.42 L735.27 863.42 L736.06 872.88 L727.40 872.88 Z" fill="#C68A70"/><path d="M708.50 883.90 L717.63 877.84 L725.51 869.17 L731.02 873.50 L738.90 871.93 L749.45 876.02 L752.60 888.62 L708.50 888.62 Z" fill="#C8112B"/><path d="M725.51 869.17 L731.02 873.50 L729.37 878.39 Z" fill="#8E0C20"/><ellipse cx="730.16" cy="855.55" rx="8.19" ry="6.62" fill="#3B2C26"/><ellipse cx="731.02" cy="860.43" rx="7.09" ry="8.35" fill="#D59A80"/><rect x="725.19" y="857.75" width="5.04" height="2.76" rx="0.79" fill="none" stroke="#54433D" stroke-width="0.87" opacity=".85"/><rect x="731.81" y="857.75" width="5.04" height="2.76" rx="0.79" fill="none" stroke="#54433D" stroke-width="0.87" opacity=".85"/><path d="M727.79 864.61 Q731.34 866.10 734.49 864.61" fill="none" stroke="#B9646A" stroke-width="0.87" opacity=".7"/></g><circle cx="730.55" cy="865.0" r="18.4" fill="none" stroke="#fff" stroke-opacity=".45" stroke-width="1"/><circle cx="742.55" cy="876.6999999999999" r="7.3" fill="#00DE8E"/></g>
<text x="759.6" y="870.4" font-size="17" font-weight="400" fill="#0E2552" textLength="91" lengthAdjust="spacingAndGlyphs">Easy Admin</text>
<text x="991.4" y="870.4" font-size="17" font-weight="400" fill="#0E2552">-</text>
<text x="1110.6" y="870.4" font-size="17" font-weight="400" fill="#0E2552">-</text>
<text x="1220" y="870.4" font-size="17" font-weight="400" fill="#0E2552">-</text>
<text x="1326" y="870.4" font-size="17" font-weight="400" fill="#0E2552" textLength="45.3" lengthAdjust="spacingAndGlyphs">1.00 h</text>
<text x="1436.8" y="870.4" font-size="17" font-weight="400" fill="#0E2552">-</text>
<text x="1542.4" y="870.4" font-size="17" font-weight="400" fill="#0E2552" textLength="45.3" lengthAdjust="spacingAndGlyphs">1.00 h</text>
<text x="312.2" y="929.0" font-size="17" font-weight="400" fill="#0E2552" textLength="317.8" lengthAdjust="spacingAndGlyphs">I want a new Mac PC for my home office</text>
<g><clipPath id="av730_923"><circle cx="730.55" cy="923.6" r="18.9"/></clipPath><circle cx="730.55" cy="923.6" r="18.9" fill="#A9CAEE"/><g clip-path="url(#av730_923)"><path d="M726.61 922.02 L735.27 922.02 L736.06 931.48 L727.40 931.48 Z" fill="#C68A70"/><path d="M708.50 942.50 L717.63 936.44 L725.51 927.77 L731.02 932.11 L738.90 930.53 L749.45 934.62 L752.60 947.23 L708.50 947.23 Z" fill="#C8112B"/><path d="M725.51 927.77 L731.02 932.11 L729.37 936.99 Z" fill="#8E0C20"/><ellipse cx="730.16" cy="914.15" rx="8.19" ry="6.62" fill="#3B2C26"/><ellipse cx="731.02" cy="919.03" rx="7.09" ry="8.35" fill="#D59A80"/><rect x="725.19" y="916.36" width="5.04" height="2.76" rx="0.79" fill="none" stroke="#54433D" stroke-width="0.87" opacity=".85"/><rect x="731.81" y="916.36" width="5.04" height="2.76" rx="0.79" fill="none" stroke="#54433D" stroke-width="0.87" opacity=".85"/><path d="M727.79 923.21 Q731.34 924.70 734.49 923.21" fill="none" stroke="#B9646A" stroke-width="0.87" opacity=".7"/></g><circle cx="730.55" cy="923.6" r="18.4" fill="none" stroke="#fff" stroke-opacity=".45" stroke-width="1"/><circle cx="742.55" cy="935.3" r="7.3" fill="#00DE8E"/></g>
<text x="759.6" y="928.4" font-size="17" font-weight="400" fill="#0E2552" textLength="91" lengthAdjust="spacingAndGlyphs">Easy Admin</text>
<text x="991.4" y="929.0" font-size="17" font-weight="400" fill="#0E2552">-</text>
<text x="1110.6" y="929.0" font-size="17" font-weight="400" fill="#0E2552">-</text>
<text x="1220" y="929.0" font-size="17" font-weight="400" fill="#0E2552">-</text>
<text x="1326" y="929.0" font-size="17" font-weight="400" fill="#0E2552" textLength="48.6" lengthAdjust="spacingAndGlyphs">0.50 h</text>
<text x="1436.8" y="929.0" font-size="17" font-weight="400" fill="#0E2552">-</text>
<text x="1542.4" y="929.0" font-size="17" font-weight="400" fill="#0E2552" textLength="48.6" lengthAdjust="spacingAndGlyphs">0.50 h</text>
<text x="312.2" y="987.6" font-size="17" font-weight="400" fill="#0E2552" textLength="308.8" lengthAdjust="spacingAndGlyphs">My PC has just shut down. Please help!</text>
<g><clipPath id="av730_982"><circle cx="730.55" cy="982.2" r="18.9"/></clipPath><circle cx="730.55" cy="982.2" r="18.9" fill="#A9CAEE"/><g clip-path="url(#av730_982)"><path d="M726.61 980.62 L735.27 980.62 L736.06 990.08 L727.40 990.08 Z" fill="#C68A70"/><path d="M708.50 1001.10 L717.63 995.04 L725.51 986.37 L731.02 990.71 L738.90 989.13 L749.45 993.23 L752.60 1005.83 L708.50 1005.83 Z" fill="#C8112B"/><path d="M725.51 986.37 L731.02 990.71 L729.37 995.59 Z" fill="#8E0C20"/><ellipse cx="730.16" cy="972.75" rx="8.19" ry="6.62" fill="#3B2C26"/><ellipse cx="731.02" cy="977.63" rx="7.09" ry="8.35" fill="#D59A80"/><rect x="725.19" y="974.96" width="5.04" height="2.76" rx="0.79" fill="none" stroke="#54433D" stroke-width="0.87" opacity=".85"/><rect x="731.81" y="974.96" width="5.04" height="2.76" rx="0.79" fill="none" stroke="#54433D" stroke-width="0.87" opacity=".85"/><path d="M727.79 981.81 Q731.34 983.30 734.49 981.81" fill="none" stroke="#B9646A" stroke-width="0.87" opacity=".7"/></g><circle cx="730.55" cy="982.2" r="18.4" fill="none" stroke="#fff" stroke-opacity=".45" stroke-width="1"/><circle cx="742.55" cy="993.9" r="7.3" fill="#00DE8E"/></g>
<text x="759.6" y="987.0" font-size="17" font-weight="400" fill="#0E2552" textLength="91" lengthAdjust="spacingAndGlyphs">Easy Admin</text>
<text x="991.4" y="987.6" font-size="17" font-weight="400" fill="#0E2552">-</text>
<text x="1110.6" y="987.6" font-size="17" font-weight="400" fill="#0E2552">-</text>
<text x="1220" y="987.6" font-size="17" font-weight="400" fill="#0E2552" textLength="48.6" lengthAdjust="spacingAndGlyphs">4.00 h</text>
<text x="1326" y="987.6" font-size="17" font-weight="400" fill="#0E2552">-</text>
<text x="1436.8" y="987.6" font-size="17" font-weight="400" fill="#0E2552">-</text>
<text x="1542.4" y="987.6" font-size="17" font-weight="400" fill="#0E2552" textLength="48.6" lengthAdjust="spacingAndGlyphs">4.00 h</text>
<text x="312.2" y="1046.2" font-size="17" font-weight="400" fill="#0E2552" textLength="221" lengthAdjust="spacingAndGlyphs">Online payment not working</text>
<g><clipPath id="av730_1040"><circle cx="730.55" cy="1040.8" r="18.9"/></clipPath><circle cx="730.55" cy="1040.8" r="18.9" fill="#A9CAEE"/><g clip-path="url(#av730_1040)"><path d="M726.61 1039.22 L735.27 1039.22 L736.06 1048.67 L727.40 1048.67 Z" fill="#C68A70"/><path d="M708.50 1059.70 L717.63 1053.64 L725.51 1044.97 L731.02 1049.31 L738.90 1047.73 L749.45 1051.83 L752.60 1064.42 L708.50 1064.42 Z" fill="#C8112B"/><path d="M725.51 1044.97 L731.02 1049.31 L729.37 1054.19 Z" fill="#8E0C20"/><ellipse cx="730.16" cy="1031.35" rx="8.19" ry="6.62" fill="#3B2C26"/><ellipse cx="731.02" cy="1036.23" rx="7.09" ry="8.35" fill="#D59A80"/><rect x="725.19" y="1033.56" width="5.04" height="2.76" rx="0.79" fill="none" stroke="#54433D" stroke-width="0.87" opacity=".85"/><rect x="731.81" y="1033.56" width="5.04" height="2.76" rx="0.79" fill="none" stroke="#54433D" stroke-width="0.87" opacity=".85"/><path d="M727.79 1040.41 Q731.34 1041.90 734.49 1040.41" fill="none" stroke="#B9646A" stroke-width="0.87" opacity=".7"/></g><circle cx="730.55" cy="1040.8" r="18.4" fill="none" stroke="#fff" stroke-opacity=".45" stroke-width="1"/><circle cx="742.55" cy="1052.5" r="7.3" fill="#00DE8E"/></g>
<text x="759.6" y="1045.6" font-size="17" font-weight="400" fill="#0E2552" textLength="91" lengthAdjust="spacingAndGlyphs">Easy Admin</text>
<text x="991.4" y="1046.2" font-size="17" font-weight="400" fill="#0E2552">-</text>
<text x="1110.6" y="1046.2" font-size="17" font-weight="400" fill="#0E2552">-</text>
<text x="1220" y="1046.2" font-size="17" font-weight="400" fill="#0E2552">-</text>
<text x="1326" y="1046.2" font-size="17" font-weight="400" fill="#0E2552">-</text>
<text x="1436.8" y="1046.2" font-size="17" font-weight="400" fill="#0E2552" textLength="45.3" lengthAdjust="spacingAndGlyphs">1.00 h</text>
<text x="1542.4" y="1046.2" font-size="17" font-weight="400" fill="#0E2552" textLength="45.3" lengthAdjust="spacingAndGlyphs">1.00 h</text>
<text x="1684" y="155.4" font-size="17" font-weight="400" fill="#3C4366" textLength="104.5" lengthAdjust="spacingAndGlyphs" stroke="#3C4366" stroke-width="0.25">All mailboxes</text>
<text x="1684" y="197.9" font-size="17" font-weight="400" fill="#3C4366" textLength="158.3" lengthAdjust="spacingAndGlyphs" stroke="#3C4366" stroke-width="0.25">All e-mail templates</text>
<text x="1684" y="241.2" font-size="17" font-weight="400" fill="#3C4366" textLength="172.9" lengthAdjust="spacingAndGlyphs" stroke="#3C4366" stroke-width="0.25">All Help desk projects</text>
<text x="1684" y="283.4" font-size="17" font-weight="400" fill="#3C4366" textLength="147.9" lengthAdjust="spacingAndGlyphs" stroke="#3C4366" stroke-width="0.25">Help desk settings</text>
<text x="1684" y="325.8" font-size="17" font-weight="400" fill="#3C4366" textLength="94.1" lengthAdjust="spacingAndGlyphs" stroke="#3C4366" stroke-width="0.25">SLA reports</text>
<text x="1684" y="368.2" font-size="17" font-weight="400" fill="#3C4366" textLength="150.4" lengthAdjust="spacingAndGlyphs" stroke="#3C4366" stroke-width="0.25">Recalculate tickets</text>
<text x="1684" y="411.2" font-size="17" font-weight="400" fill="#3C4366" textLength="62" lengthAdjust="spacingAndGlyphs" stroke="#3C4366" stroke-width="0.25">Reports</text>
<text x="1684" y="453.7" font-size="17" font-weight="400" fill="#3C4366" textLength="127" lengthAdjust="spacingAndGlyphs" stroke="#3C4366" stroke-width="0.25">Help desk users</text>
<g fill="none" stroke="#3C4366" stroke-width="1.4"><line x1="1653.8" y1="140.4" x2="1653.8" y2="159.2"/><path d="M1657.8 142.2 L1668.2 148.4 L1657.8 154.6 Z"/><rect x="1651.6" y="184" width="18" height="16" rx="1.6"/><path d="M1653.4 188 L1660.6 193.4 L1667.8 188 M1653.6 197.4 L1656.2 194.8 M1667.6 197.4 L1665 194.8"/><path d="M1651.3 226 L1651.3 241.4 L1655 241.4 M1651.3 233 L1655 233"/><rect x="1658.6" y="229.8" width="11.4" height="5.2"/><rect x="1658.6" y="239.4" width="11.4" height="5.2"/><circle cx="1657" cy="271.5" r="2.6"/><line x1="1651" y1="271.5" x2="1654.4" y2="271.5"/><line x1="1664" y1="271.5" x2="1670" y2="271.5"/><circle cx="1664" cy="282.6" r="2.6"/><line x1="1651" y1="282.6" x2="1661.4" y2="282.6"/><line x1="1666.6" y1="282.6" x2="1670" y2="282.6"/><circle cx="1660.3" cy="320.3" r="9.2"/><circle cx="1660.3" cy="320.3" r="5.8"/><circle cx="1660.3" cy="320.3" r="2"/><path d="M1653.6 354 L1668.4 363 L1653.6 372 Z"/><circle cx="1660.3" cy="406.3" r="9.2"/><circle cx="1660.3" cy="406.3" r="5.8"/><circle cx="1660.3" cy="406.3" r="2"/><circle cx="1660.4" cy="442.6" r="4.2"/><path d="M1652.2 457.4 C 1652.2 452 1655.6 449.8 1660.4 449.8 C 1665.2 449.8 1668.6 452 1668.6 457.4 Z"/></g>
</svg>
</body></html>
